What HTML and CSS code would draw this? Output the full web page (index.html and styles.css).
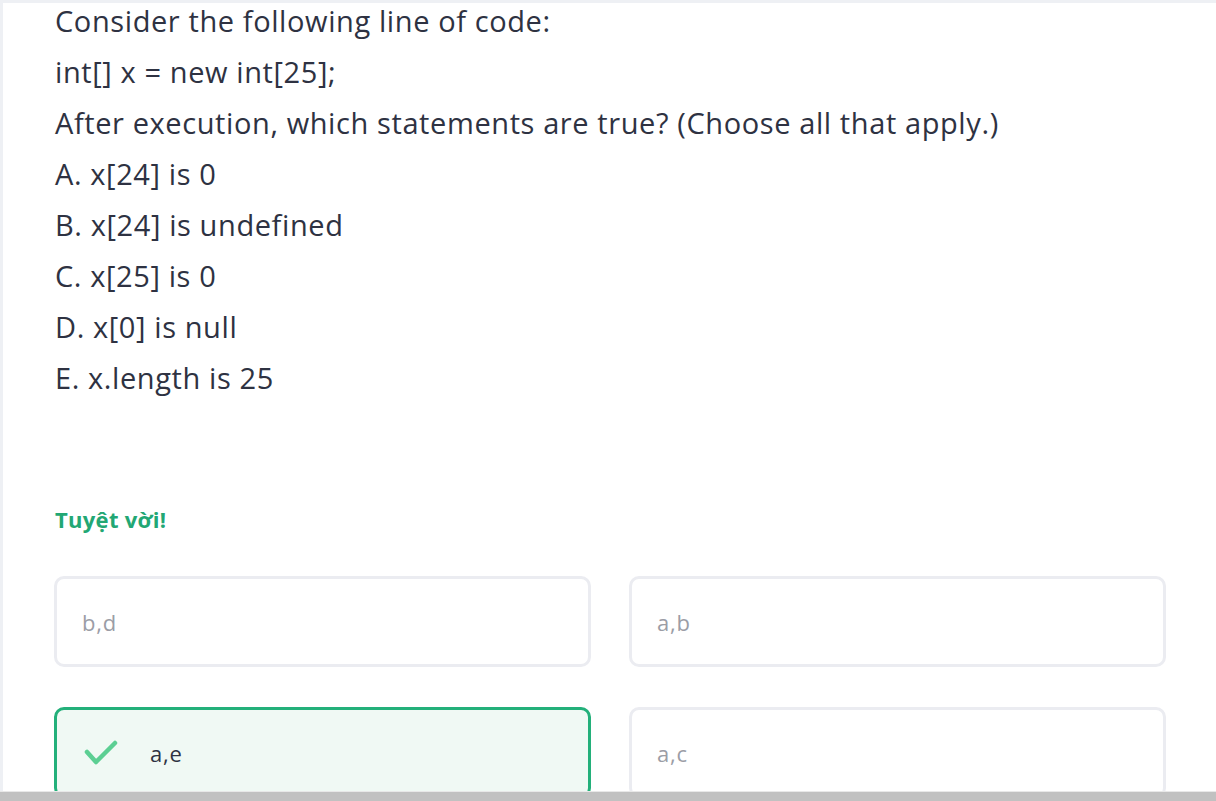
FILE: index.html
```html
<!DOCTYPE html>
<html>
<head>
<meta charset="utf-8">
<link rel="stylesheet" href="styles.css">
</head>
<body>
<div class="panel">
  <div class="question">
    <p class="line">Consider the following line of code:</p>
    <p class="line">int[] x = new int[25];</p>
    <p class="line">After execution, which statements are true? (Choose all that apply.)</p>
    <p class="line">A. x[24] is 0</p>
    <p class="line">B. x[24] is undefined</p>
    <p class="line">C. x[25] is 0</p>
    <p class="line">D. x[0] is null</p>
    <p class="line">E. x.length is 25</p>
  </div>
  <div class="feedback">Tuyệt vời!</div>
  <div class="answers">
    <div class="answer"><span class="answer-text">b,d</span></div>
    <div class="answer"><span class="answer-text">a,b</span></div>
    <div class="answer answer-correct">
      <svg class="check" width="34" height="26" viewBox="0 0 34 26"><path d="M3 12 L12 22 L31 3" fill="none" stroke="#5ccf93" stroke-width="4.5" stroke-linecap="round" stroke-linejoin="round"/></svg>
      <span class="answer-text">a,e</span>
    </div>
    <div class="answer"><span class="answer-text">a,c</span></div>
  </div>
</div>
<div class="hscroll"></div>
</body>
</html>
```
FILE: styles.css
```css
html, body {
  margin: 0;
  padding: 0;
  height: 100%;
  overflow: hidden;
}
body {
  background: #eef0f4;
  font-family: "Open Sans", "Noto Sans", sans-serif;
  color: #2e3242;
}
.panel {
  margin: 3px 0 0 3px;
  background: #ffffff;
  height: 798px;
  padding: 0 0 0 52px;
  box-sizing: border-box;
}
.question {
  display: flex;
  flex-direction: column;
  gap: 13px;
}
.line {
  margin: -1px 0 1px 0;
  font-size: 29px;
  line-height: 38px;
  letter-spacing: 0.6px;
}
.feedback {
  margin-top: 107px;
  font-size: 22px;
  font-weight: 700;
  color: #22a774;
  line-height: 28px;
  letter-spacing: 0.3px;
}
.answers {
  margin-top: 43px;
  margin-left: -1px;
  width: 1112px;
  display: grid;
  grid-template-columns: 537px 537px;
  column-gap: 38px;
  row-gap: 40px;
}
.answer {
  height: 91px;
  box-sizing: border-box;
  border: 3px solid #ebecf1;
  border-radius: 10px;
  display: flex;
  align-items: center;
  padding-left: 25px;
  background: #fff;
}
.answer-text {
  font-size: 22px;
  letter-spacing: 0.8px;
  color: #9b9da6;
}
.answer-correct {
  border-color: #23b07a;
  background: #f0f9f4;
  padding-left: 27px;
}
.answer-correct .answer-text {
  color: #2e3242;
  margin-left: 32px;
}
.check {
  display: block;
}
.hscroll {
  position: fixed;
  left: 0;
  right: 0;
  bottom: 0;
  height: 9px;
  background: #c1c1c1;
  border-top: 1px solid #e8e8e8;
}
```
